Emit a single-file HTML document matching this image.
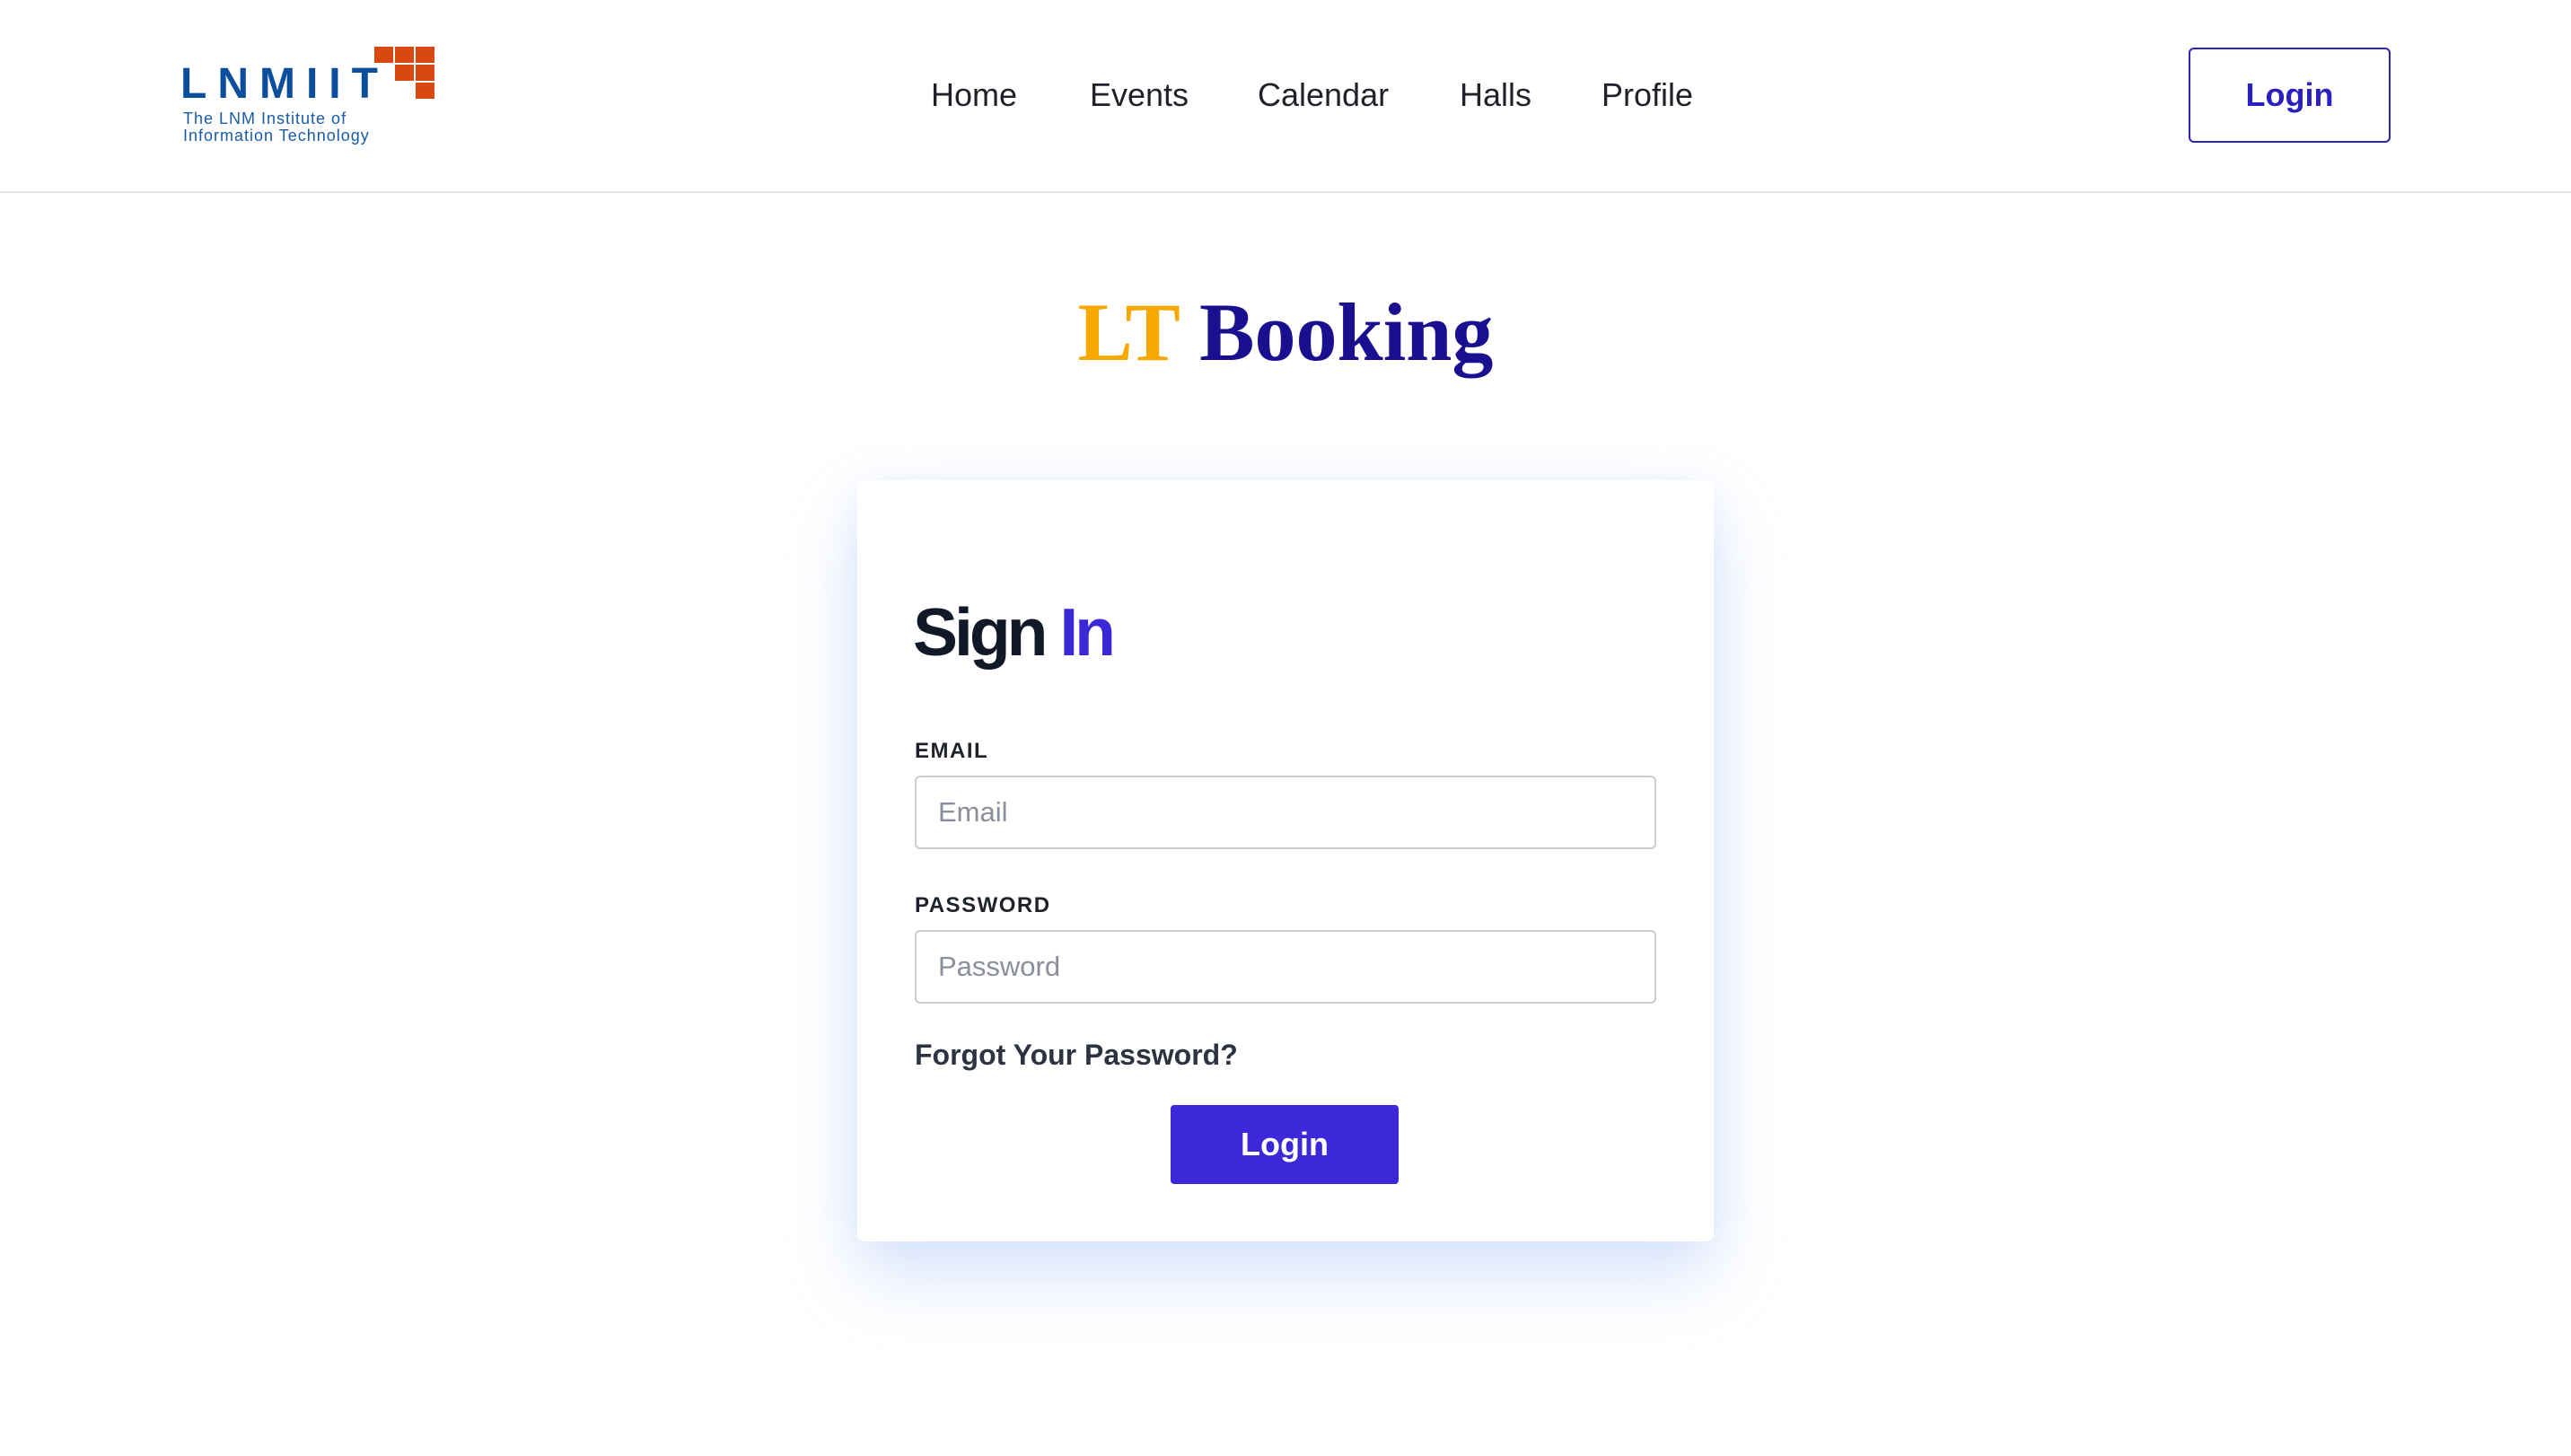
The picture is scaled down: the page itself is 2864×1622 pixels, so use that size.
<!DOCTYPE html>
<html><head><meta charset="utf-8"><style>
*{margin:0;padding:0;box-sizing:border-box}
html,body{width:2864px;height:1622px;background:#fff;overflow:hidden;font-family:"Liberation Sans",sans-serif}
.hdr{position:absolute;left:0;top:0;width:2864px;height:215px;border-bottom:2px solid #e2e4e8}
.sq{position:absolute;width:21px;height:18px;background:#d9480f}
.lnm{position:absolute;left:201px;top:70px;font-size:48px;font-weight:bold;color:#0b4f9c;letter-spacing:12px;line-height:1}
.sub{position:absolute;left:204px;font-size:18px;color:#1a5ca8;line-height:1;letter-spacing:1px}
.nav{position:absolute;top:88px;font-size:36px;color:#1f2329;line-height:1}
.btn1{position:absolute;left:2438px;top:53px;width:225px;height:106px;border:2px solid #2d22b8;border-radius:6px;color:#2a1fbf;font-weight:bold;font-size:36px;display:flex;align-items:center;justify-content:center}
.title{position:absolute;left:0;width:2864px;top:324px;text-align:center;font-family:"Liberation Serif",serif;font-weight:bold;font-size:92px;color:#1a0f8f;line-height:1}
.card{position:absolute;left:955px;top:535px;width:954px;height:848px;background:#fff;border-radius:8px;box-shadow:0 40px 80px rgba(120,160,240,.28),0 0 40px rgba(180,200,250,.18)}
.abs{position:absolute}
.lbl{position:absolute;left:64px;font-size:24px;font-weight:bold;color:#1f2329;letter-spacing:1.5px;line-height:1}
.inp{position:absolute;left:64px;width:826px;height:82px;border:2px solid #c8ccd3;border-radius:6px;font-size:31px;color:#8a8f99;padding-left:24px;display:flex;align-items:center}
</style></head><body>
<div class="hdr">
  <div class="sq" style="left:417px;top:52px"></div>
  <div class="sq" style="left:440px;top:52px"></div>
  <div class="sq" style="left:463px;top:52px"></div>
  <div class="sq" style="left:440px;top:72px"></div>
  <div class="sq" style="left:463px;top:72px"></div>
  <div class="sq" style="left:463px;top:92px"></div>
  <div class="lnm">LNMIIT</div>
  <div class="sub" style="top:123px">The LNM Institute of</div>
  <div class="sub" style="top:142px">Information Technology</div>
  <div class="nav" style="left:1037px">Home</div>
  <div class="nav" style="left:1214px">Events</div>
  <div class="nav" style="left:1401px">Calendar</div>
  <div class="nav" style="left:1626px">Halls</div>
  <div class="nav" style="left:1784px">Profile</div>
  <div class="btn1">Login</div>
</div>
<div class="title"><span style="color:#f7a900">LT</span> Booking</div>
<div class="card">
  <div class="abs" style="left:62px;top:132px;font-size:75px;font-weight:bold;letter-spacing:-4px;color:#111827;line-height:1">Sign <span style="color:#3b28d6">In</span></div>
  <div class="lbl" style="top:290px">EMAIL</div>
  <div class="inp" style="top:329px">Email</div>
  <div class="lbl" style="top:462px">PASSWORD</div>
  <div class="inp" style="top:501px">Password</div>
  <div class="abs" style="left:64px;top:624px;font-size:32px;font-weight:bold;color:#2d3340;line-height:1">Forgot Your Password?</div>
  <div class="abs" style="left:349px;top:696px;width:254px;height:88px;background:#3d28d9;border-radius:4px;color:#fff;font-weight:bold;font-size:36px;display:flex;align-items:center;justify-content:center">Login</div>
</div>
</body></html>
